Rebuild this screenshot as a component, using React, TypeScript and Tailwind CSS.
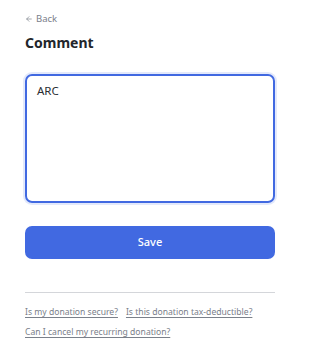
import { ArrowLeft } from "lucide-react";

const faqLinks = [
  "Is my donation secure?",
  "Is this donation tax-deductible?",
  "Can I cancel my recurring donation?",
];

export default function App() {
  return (
    <div className="min-h-[359px] w-[300px] bg-white px-[25px] pt-[13px] font-['Noto_Sans',sans-serif] text-[#1f2328]">
      <button className="flex items-center gap-[3px] text-[9.5px] leading-[12px] text-[#7a808a]">
        <ArrowLeft className="h-[8px] w-[8px]" strokeWidth={2} />
        Back
      </button>
      <h1 className="mt-[9px] text-[14px] font-bold leading-[18px] text-[#22262b]">Comment</h1>

      <div className="mt-[22px] h-[129px] rounded-[7px] border-2 border-[#4169e1] px-[10px] py-[8px] shadow-[0_0_0_2px_rgba(65,105,225,0.15)]">
        <p className="text-[11.5px] leading-[14px] text-[#2a2e33]">ARC</p>
      </div>

      <button className="mt-[23px] flex h-[33px] w-full items-center justify-center rounded-[7px] bg-[#4169e1] text-[11px] font-medium text-white">
        Save
      </button>

      <div className="mt-[33px] border-t border-[#d4d6da]" />

      <div className="mt-[13px] flex flex-wrap gap-x-[8px] gap-y-[8px] text-[8.6px] leading-[12px] text-[#7a808a]">
        {faqLinks.map((link) => (
          <a key={link} href="#" className="underline underline-offset-2">
            {link}
          </a>
        ))}
      </div>
    </div>
  );
}
